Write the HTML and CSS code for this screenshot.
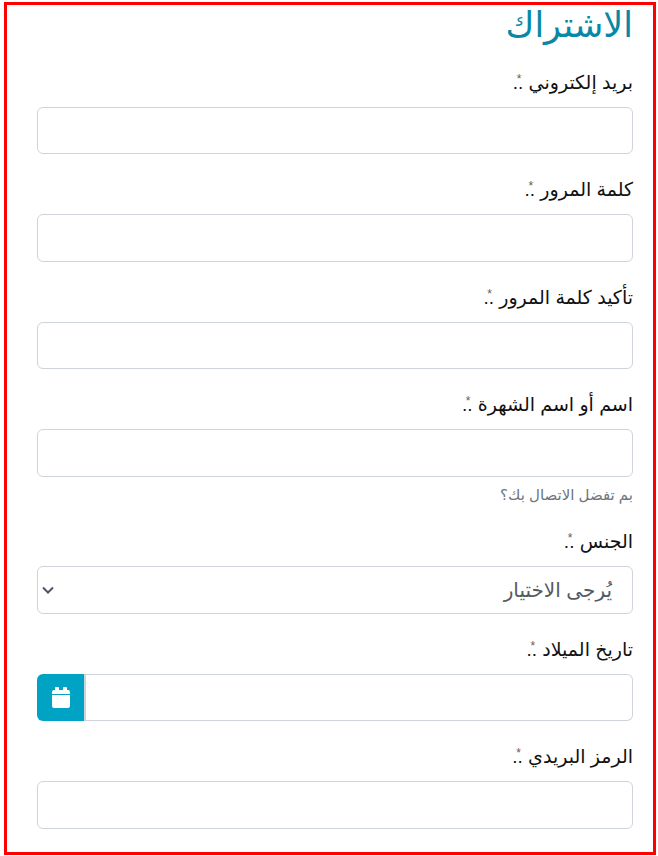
FILE: index.html
```html
<!DOCTYPE html>
<html dir="rtl" lang="ar">
<head>
    <meta charset="utf-8">
    <link rel="stylesheet" href="styles.css">
</head>
<body>
    <div class="frame">
        <form class="signup">
            <h2 class="title">الاشتراك</h2>

            <div class="field">
                <label>بريد إلكتروني <span class="req">*</span>..</label>
                <input type="text" class="control">
            </div>
            <div class="field">
                <label>كلمة المرور <span class="req">*</span>..</label>
                <input type="password" class="control">
            </div>
            <div class="field">
                <label>تأكيد كلمة المرور <span class="req">*</span>..</label>
                <input type="password" class="control">
            </div>
            <div class="field">
                <label>اسم أو اسم الشهرة <span class="req">*</span>..</label>
                <input type="text" class="control">
                <small class="hint">بم تفضل الاتصال بك؟</small>
            </div>
            <div class="field">
                <label>الجنس <span class="req">*</span>..</label>
                <div class="control select">
                    <span>يُرجى الاختيار</span>
                    <svg class="chevron" width="12" height="8" viewBox="0 0 12 8"><path d="M1 1.5l5 5 5-5" fill="none" stroke="#4b5563" stroke-width="2"/></svg>
                </div>
            </div>
            <div class="field">
                <label>تاريخ الميلاد <span class="req">*</span>..</label>
                <div class="date-group">
                    <span class="date-btn">
                        <svg width="18" height="21" viewBox="0 0 18 21"><path fill="#fff" d="M4 0h2a1 1 0 0 1 1 1v2h4V1a1 1 0 0 1 1-1h2a1 1 0 0 1 1 1v2h1a2 2 0 0 1 2 2v2H0V5a2 2 0 0 1 2-2h1V1a1 1 0 0 1 1-1zM0 8h18v11a2 2 0 0 1-2 2H2a2 2 0 0 1-2-2z"/></svg>
                    </span>
                    <input type="text" class="control date-input">
                </div>
            </div>
            <div class="field">
                <label>الرمز البريدي <span class="req">*</span>..</label>
                <input type="text" class="control">
            </div>
            <div class="field">
                <label>رقم الهاتف المحمول <span class="req">*</span>..</label>
                <input type="text" class="control">
            </div>
        </form>
    </div>
</body>
</html>
```

FILE: styles.css
```css
html, body {
    height: 100%;
}
body {
    margin: 0;
    background: #fff;
    color: #212529;
    font-family: "Liberation Sans", "DejaVu Sans", sans-serif;
    overflow: hidden;
}
.frame {
    box-sizing: border-box;
    margin: 2px 2px 0 4px;
    height: 853px;
    border: 3px solid #f00;
}
.signup {
    padding: 0 20px 0 30px;
}
.title {
    margin: 0 0 23.5px;
    font-size: 35px;
    font-weight: 400;
    line-height: 40px;
    color: #0888a6;
}
.field {
    margin-bottom: 22px;
}
label {
    display: block;
    margin-bottom: 10px;
    font-size: 19px;
    line-height: 28px;
    color: #111;
}
.req {
    display: inline-block;
    width: 0;
    color: #6b5a4c;
    font-size: 12px;
    line-height: 0;
    vertical-align: 6px;
    text-indent: 2px;
}
.control {
    display: block;
    box-sizing: border-box;
    width: 100%;
    height: 47.5px;
    padding: 0 20px;
    border: 1px solid #ced4da;
    border-radius: 6px;
    background: #fff;
    font: inherit;
    font-size: 20px;
    outline: none;
}
.hint {
    display: block;
    margin-top: 7px;
    font-size: 15px;
    line-height: 22.5px;
    color: #6c757d;
}
.select {
    display: flex;
    align-items: center;
    justify-content: space-between;
    padding: 0 20px 0 4px;
    color: #555b62;
}
.date-group {
    display: flex;
    flex-direction: row-reverse;
}
.date-btn {
    display: flex;
    align-items: center;
    justify-content: center;
    flex: none;
    box-sizing: border-box;
    width: 49px;
    height: 47.5px;
    background: #00a3c4;
    border-right: 2px solid #ced4da;
    border-radius: 6px 0 0 6px;
}
.date-input {
    flex: 1;
    min-width: 0;
    border-left: 0;
    border-radius: 0 6px 6px 0;
}
```
